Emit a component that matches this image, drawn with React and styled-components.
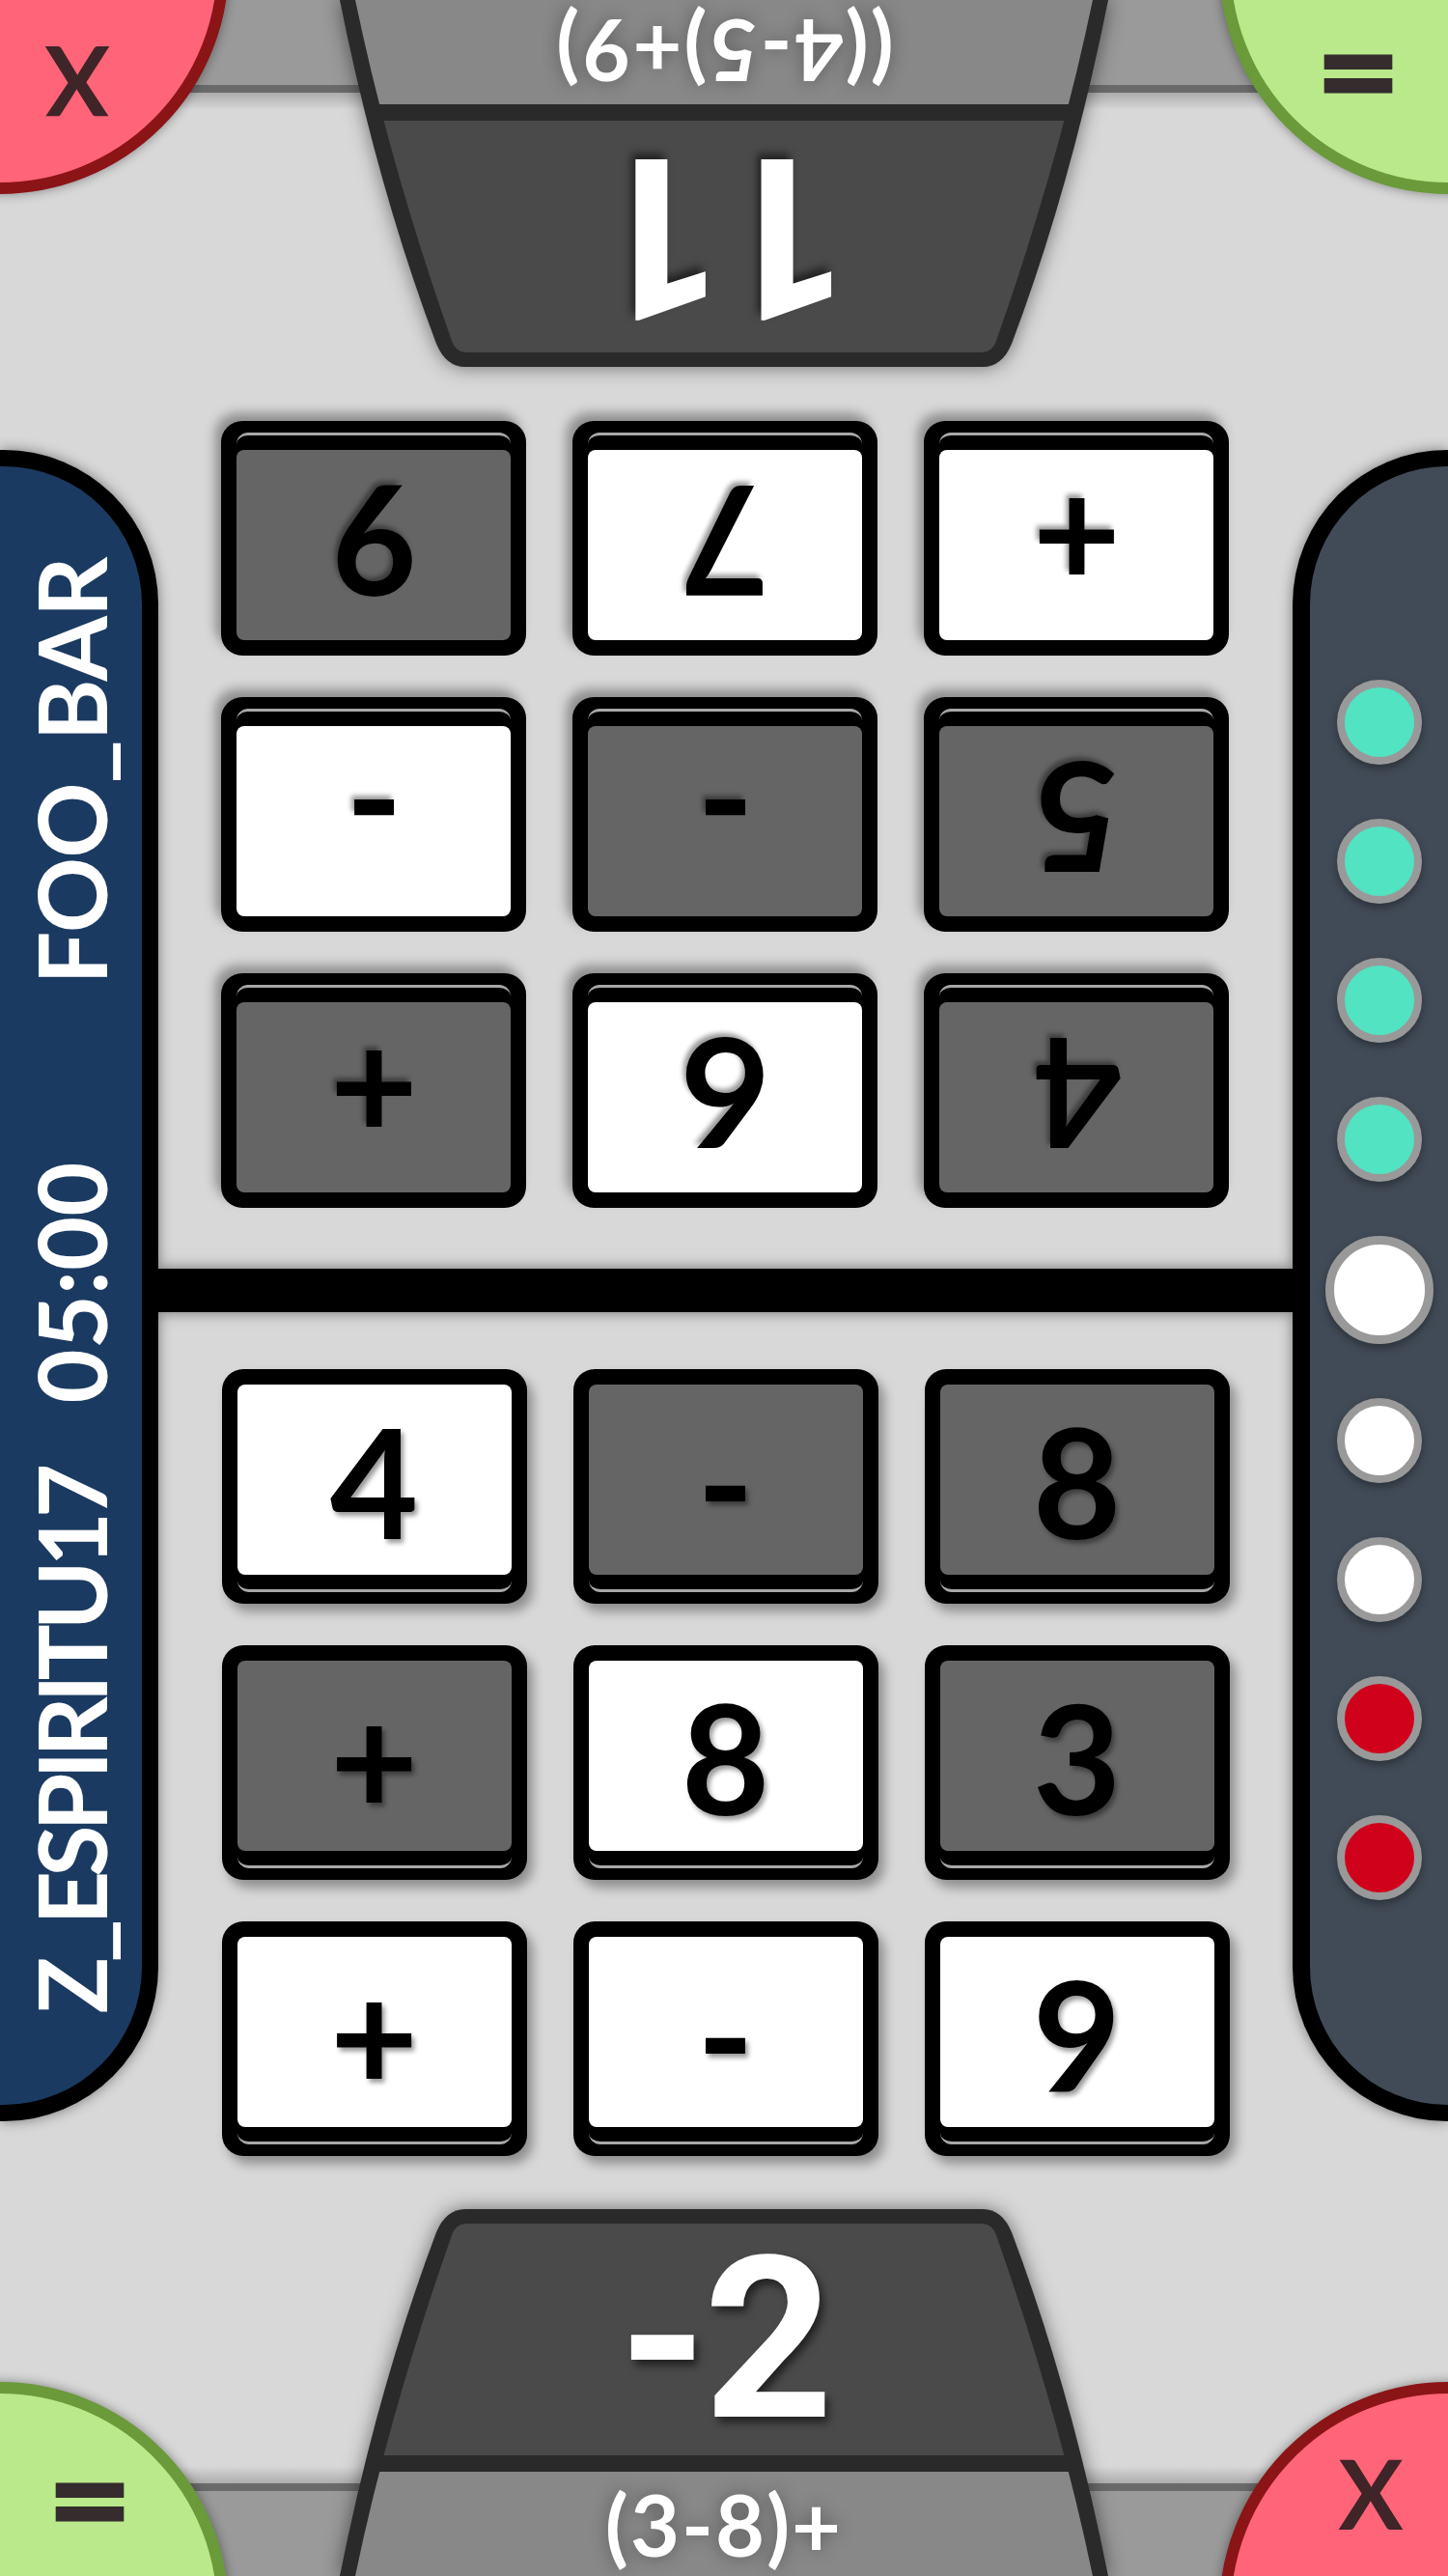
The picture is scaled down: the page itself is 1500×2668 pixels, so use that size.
import styled, { createGlobalStyle } from "styled-components";

const GlobalStyle = createGlobalStyle`
  html, body {
    margin: 0;
    padding: 0;
    background: #d8d8d8;
  }
  body {
    font-family: Lato, "Open Sans", sans-serif;
  }
`;

const Page = styled.div`
  display: grid;
  grid-template-columns: 164px 1fr 161px;
  grid-template-rows: 435px 879px 45px 874px 435px;
  width: 1500px;
  height: 100vh;
  overflow: hidden;
  background: #d8d8d8;
`;

const Footer = styled.div`
  grid-column: 1 / -1;
  grid-row: ${({ $top }) => ($top ? 1 : 5)};
  position: relative;
  overflow: hidden;
  display: flex;
  justify-content: center;
  align-items: flex-end;
  transform: ${({ $top }) => ($top ? "rotate(180deg)" : "none")};
  background: linear-gradient(
    to bottom,
    transparent calc(100% - 114px),
    rgba(0, 0, 0, 0.2) calc(100% - 96px),
    #6a6a6a calc(100% - 96px),
    #6a6a6a calc(100% - 88px),
    #9a9a9a calc(100% - 88px)
  );
`;

const ScoreWrap = styled.div`
  filter: drop-shadow(0 0 10px rgba(0, 0, 0, 0.5));
`;

const ScoreShell = styled.div`
  box-sizing: border-box;
  width: 800px;
  height: 380px;
  padding: 15px 16px 0;
  background: #2a2a2a;
  clip-path: path("M 132 0 L 668 0 Q 688 0 698 24 C 738 130 772 250 798 380 L 2 380 C 28 250 62 130 102 24 Q 112 0 132 0 Z");
`;

const ScoreInner = styled.div`
  height: 100%;
  display: flex;
  flex-direction: column;
  gap: 17px;
  clip-path: path("M 118 0 L 650 0 Q 662 0 666 12 C 704 120 740 240 766 365 L 2 365 C 28 240 64 120 102 12 Q 106 0 118 0 Z");
`;

const ScoreValue = styled.div`
  height: 240px;
  flex-shrink: 0;
  display: flex;
  align-items: center;
  justify-content: center;
  background: #4a4a4a;
  color: #fff;
  font: 700 234px/1 Roboto, Lato, sans-serif;
  letter-spacing: -4px;
  text-shadow: 4px 6px 8px rgba(0, 0, 0, 0.55);
`;

const Expression = styled.div`
  flex: 1;
  display: flex;
  align-items: center;
  justify-content: center;
  background: #888;
  color: #fff;
  font: 700 88px/1 Lato, sans-serif;
  letter-spacing: 2px;
  text-shadow: 0 0 18px rgba(0, 0, 0, 0.35);
`;

const CornerButton = styled.div`
  position: absolute;
  top: 234px;
  box-sizing: border-box;
  width: 474px;
  height: 474px;
  border-radius: 50%;
  display: flex;
  justify-content: center;
  align-items: flex-start;
  box-shadow: 0 0 12px rgba(0, 0, 0, 0.4);
  ${({ $side }) => ($side === "left" ? "left: -237px;" : "right: -237px;")}
  ${({ $kind }) =>
    $kind === "ok"
      ? `
        padding: 56px 0 0 186px;
        background: #b9e98a;
        border: 12px solid #6a9a3a;
        color: #352c2e;
        font: 700 108px/1 "DejaVu Sans", sans-serif;
        -webkit-text-stroke: 3px #352c2e;
      `
      : `
        padding: 52px 160px 0 0;
        background: #ff6478;
        border: 12px solid #8b1416;
        color: #3f2428;
        font: 700 100px/1 Lato, sans-serif;
      `}
`;

const TileArea = styled.section`
  grid-column: 2;
  grid-row: ${({ $top }) => ($top ? 2 : 4)};
  transform: ${({ $top }) => ($top ? "rotate(180deg)" : "none")};
  display: grid;
  grid-template-columns: repeat(3, 316px);
  grid-auto-rows: 243px;
  column-gap: 48px;
  row-gap: 43px;
  justify-content: center;
  align-content: start;
  padding-top: ${({ $top }) => ($top ? 63 : 59)}px;
`;

const Tile = styled.div`
  position: relative;
  box-sizing: border-box;
  padding: 16px 16px 30px;
  background: #000;
  border-radius: 22px;
  box-shadow: 6px 8px 12px rgba(0, 0, 0, 0.35);

  &::after {
    content: "";
    position: absolute;
    left: 16px;
    right: 16px;
    bottom: 12px;
    height: 14px;
    border-bottom: 3px solid #a8a8a8;
    border-radius: 0 0 12px 12px;
  }
`;

const Face = styled.div`
  height: 100%;
  border-radius: 8px;
  background: ${({ $used }) => ($used ? "#666565" : "#fff")};
  display: flex;
  align-items: center;
  justify-content: center;
  color: #000;
  font: 700 158px/1 Lato, sans-serif;
  text-shadow: 3px 4px 5px rgba(0, 0, 0, 0.4);
`;

const Divider = styled.div`
  grid-column: 2;
  grid-row: 3;
  background: #000;
  box-shadow: 0 0 14px rgba(0, 0, 0, 0.5);
  z-index: 1;
`;

const SidePanel = styled.aside`
  grid-row: 2 / 5;
  grid-column: ${({ $side }) => ($side === "left" ? 1 : 3)};
  margin: 31px 0 36px;
  border: 17px solid #000;
  box-shadow: 0 0 14px rgba(0, 0, 0, 0.45);
  display: flex;
  flex-direction: column;
  align-items: center;
  justify-content: center;
  gap: 56px;
  z-index: 2;
  ${({ $side }) =>
    $side === "left"
      ? "background: #1b3a61; border-left: none; border-radius: 0 160px 160px 0;"
      : "background: #414b57; border-right: none; border-width: 17px 0 17px 18px; border-radius: 160px 0 0 160px; padding-top: 8px;"}
`;

const Legend = styled.div`
  writing-mode: vertical-rl;
  transform: rotate(180deg);
  display: flex;
  align-items: center;
  color: #fff;
  font: 700 97px/1 Lato, sans-serif;
  white-space: nowrap;
`;

const LegendItem = styled.span`
  margin-inline-start: ${({ $space }) => $space || 0}px;
  letter-spacing: ${({ $tracking }) => $tracking || 0}px;
`;

const dotColors = {
  done: "#52e3c2",
  current: "#fff",
  open: "#fff",
  lost: "#d0021b",
};

const Dot = styled.div`
  box-sizing: border-box;
  width: ${({ $big }) => ($big ? 112 : 88)}px;
  height: ${({ $big }) => ($big ? 112 : 88)}px;
  border-radius: 50%;
  border: ${({ $big }) => ($big ? 9 : 8)}px solid #999;
  background: ${({ $state }) => dotColors[$state]};
  box-shadow: 0 4px 8px rgba(0, 0, 0, 0.35);
`;

const topTiles = [
  ["4", true], ["6", false], ["+", true],
  ["5", true], ["-", true], ["-", false],
  ["+", false], ["7", false], ["9", true],
];

const bottomTiles = [
  ["4", false], ["-", true], ["8", true],
  ["+", true], ["8", false], ["3", true],
  ["+", false], ["-", false], ["9", false],
];

const rounds = ["done", "done", "done", "done", "current", "open", "open", "lost", "lost"];

function Board({ top, tiles }) {
  return (
    <TileArea $top={top}>
      {tiles.map(([label, used], i) => (
        <Tile key={i}>
          <Face $used={used}>{label}</Face>
        </Tile>
      ))}
    </TileArea>
  );
}

function ScoreBar({ top, score, expression }) {
  return (
    <Footer $top={top}>
      <CornerButton $side="left" $kind="ok">=</CornerButton>
      <ScoreWrap>
        <ScoreShell>
          <ScoreInner>
            <ScoreValue>{score}</ScoreValue>
            <Expression>{expression}</Expression>
          </ScoreInner>
        </ScoreShell>
      </ScoreWrap>
      <CornerButton $side="right" $kind="cancel">X</CornerButton>
    </Footer>
  );
}

export default function App() {
  return (
    <>
      <GlobalStyle />
      <Page>
        <ScoreBar top score="11" expression="((4-5)+9)" />
        <Board top tiles={topTiles} />
        <Divider />
        <Board tiles={bottomTiles} />
        <ScoreBar score="-2" expression="(3-8)+" />
        <SidePanel $side="left">
          <Legend>
            <LegendItem $tracking={-6}>Z_ESPIRITU17</LegendItem>
            <LegendItem $space={68}>05:00</LegendItem>
            <LegendItem $space={184} $tracking={-1}>FOO_BAR</LegendItem>
          </Legend>
        </SidePanel>
        <SidePanel $side="right">
          {rounds.map((state, i) => (
            <Dot key={i} $state={state} $big={state === "current"} />
          ))}
        </SidePanel>
      </Page>
    </>
  );
}
